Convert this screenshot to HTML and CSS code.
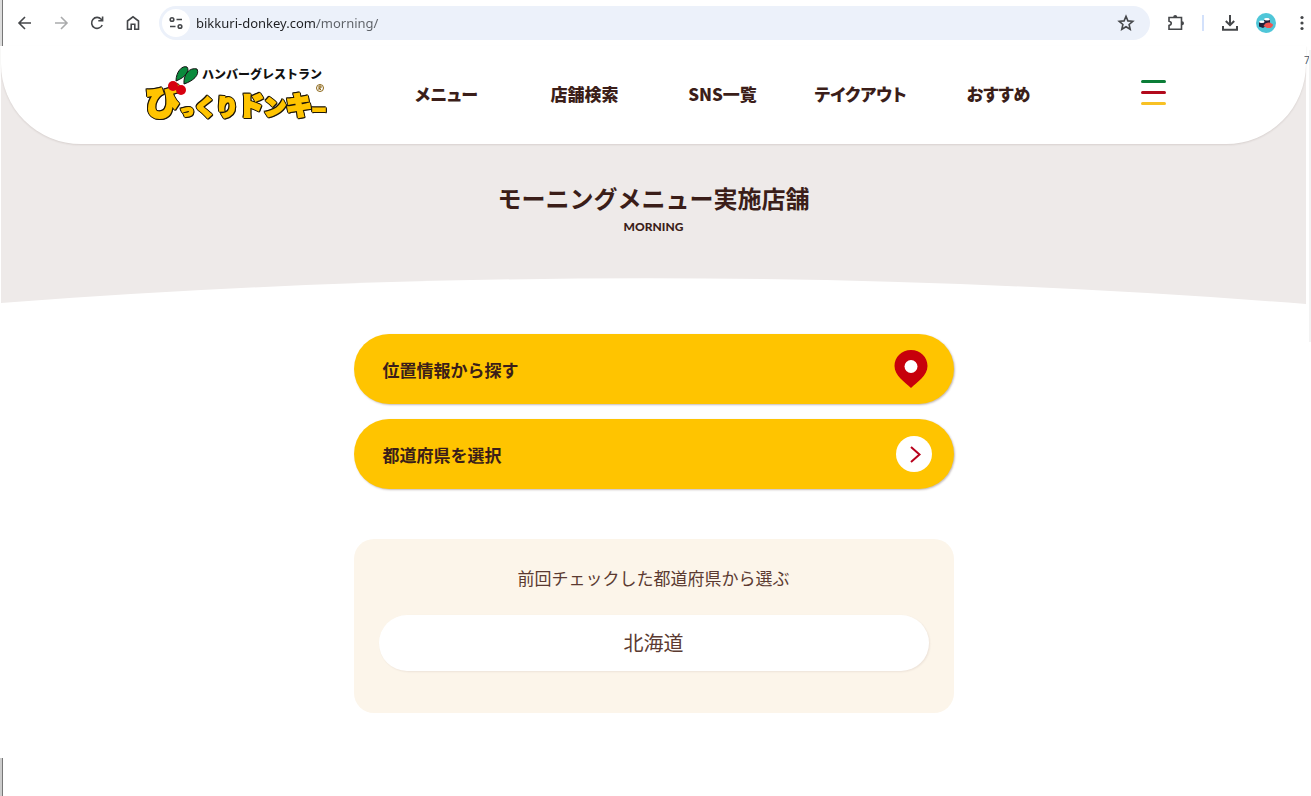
FILE: index.html
```html
<!DOCTYPE html>
<html lang="ja">
<head>
  <meta charset="UTF-8" />
  <title>モーニングメニュー実施店舗</title>
  <meta name="viewport" content="width=device-width, initial-scale=1.0"/>
  <link rel="stylesheet" href="styles.css">
</head>
<body>
  <div class="toolbar">
    <div class="tools">
      <button type="button" aria-label="戻る">
        <svg width="18" height="18" viewBox="0 0 18 18"><path d="M15 9H3.500M9 3L3 9l6 6"/></svg>
      </button>
      <button type="button" aria-label="進む" disabled>
        <svg width="18" height="18" viewBox="0 0 18 18"><path d="M3 9h11.500M9 3l6 6-6 6"/></svg>
      </button>
      <button type="button" aria-label="再読み込み">
        <svg width="18" height="18" viewBox="0 0 18 18"><path d="M14.200 11A5.500 5.500 0 1 1 13.200 5.200L14.500 6.500M14.600 2.500v4.300h-4.300"/></svg>
      </button>
      <button type="button" aria-label="ホーム">
        <svg width="18" height="18" viewBox="0 0 18 18"><path d="M3.500 7L9 2.800 14.500 7v8.300h-3.700v-5H7.200v5H3.500z"/></svg>
      </button>
    </div>
    <div class="omnibox">
      <button type="button" class="site-info" aria-label="サイト情報">
        <svg width="16" height="16" viewBox="0 0 16 16"><circle cx="4" cy="4.500" r="1.800"/><path d="M8.500 4.500H14M2 11.500h5.500"/><circle cx="12" cy="11.500" r="1.800"/></svg>
      </button>
      <input type="text" class="url" aria-label="アドレス" value="bikkuri-donkey.com/morning/">
      <button type="button" aria-label="ブックマーク">
        <svg width="18" height="18" viewBox="0 0 18 18"><path d="M9 2.300l1.900 4.600 4.900.4-3.700 3.200 1.100 4.800L9 12.700l-4.200 2.600 1.100-4.800-3.700-3.200 4.900-.4z"/></svg>
      </button>
    </div>
    <div class="tools right">
      <button type="button" aria-label="拡張機能">
        <svg width="18" height="18" viewBox="0 0 18 18"><path d="M2 3.500h12.500v11.700H2v-3.700c3-.6 3-3.700 0-4.300z"/><path class="solid" d="M6.200 3a2 2 0 0 1 4 0zM15 7.300a2 2 0 0 1 0 4z"/></svg>
      </button>
      <span class="divider"></span>
      <button type="button" aria-label="ダウンロード">
        <svg class="bold" width="18" height="18" viewBox="0 0 18 18"><path d="M9 1v10M4.800 7L9 11.200 13.200 7M2 12v3.800h14V12"/></svg>
      </button>
      <button type="button" class="profile" aria-label="プロフィール">
        <svg width="20" height="20" viewBox="0 0 20 20">
          <circle cx="10" cy="10" r="10" fill="#4fc6d8"/>
          <path d="M3 8.500v5l4 1.500 3-2-1-5z" fill="#22203a"/>
          <path d="M8 6.500v4l6 0v-5z" fill="#22203a"/>
          <ellipse cx="5.800" cy="8.800" rx="2.800" ry="1.200" fill="#fff"/>
          <ellipse cx="11" cy="6.200" rx="3" ry="1.200" fill="#fff"/>
          <path d="M7.500 13c2-4 7-4.500 9.500-1.500 0 3-3 4-6 3.500z" fill="#ef5350"/>
        </svg>
      </button>
      <button type="button" class="dots" aria-label="メニューを開く">
        <svg width="6" height="18" viewBox="0 0 6 18"><g class="solid"><circle cx="3" cy="3.500" r="1.600"/><circle cx="3" cy="9" r="1.600"/><circle cx="3" cy="14.500" r="1.600"/></g></svg>
      </button>
    </div>
  </div>

  <div class="page">
    <div class="top">
      <header class="header">
        <div class="header-inner">
          <a href="#" class="logo" aria-label="びっくりドンキー">
            <svg width="186" height="64" viewBox="0 0 186 64">
              <text class="logo-sub" x="60" y="17">ハンバーグレストラン</text>
              <text class="logo-main" x="4" y="53"><tspan class="xl">び</tspan><tspan class="s">っ</tspan><tspan class="m">く</tspan><tspan class="m">り</tspan><tspan class="l">ド</tspan><tspan class="m">ン</tspan><tspan class="l">キ</tspan><tspan class="s">ー</tspan></text>
              <g fill="#0a8a3c" stroke="#111" stroke-width="1">
                <path d="M34 19C34 10 40 3 45 5c3 4-1 10-11 14z"/>
                <path d="M42 22C41 12 48 5 55 7c3 6-4 12-13 15z"/>
              </g>
              <circle cx="31" cy="24" r="5" fill="#d7000f"/>
              <circle cx="39" cy="28" r="5" fill="#d7000f"/>
              <g fill="none" stroke="#8a6414">
                <circle cx="178" cy="26" r="3.500"/>
                <path d="M177 28v-4h2v2h-2l2 2"/>
              </g>
            </svg>
          </a>
          <nav class="nav">
            <a href="#">メニュー</a>
            <a href="#">店舗検索</a>
            <a href="#">SNS一覧</a>
            <a href="#">テイクアウト</a>
            <a href="#">おすすめ</a>
          </nav>
          <button type="button" class="menu" aria-label="メニュー">
            <span class="green"></span>
            <span class="red"></span>
            <span class="yellow"></span>
          </button>
        </div>
      </header>
      <div class="hero">
        <h1>モーニングメニュー実施店舗</h1>
        <p>MORNING</p>
      </div>
      <svg class="curve" viewBox="0 0 100 26" preserveAspectRatio="none"><path d="M0 25Q50-25 100 26V27H0z"/></svg>
    </div>

    <main class="content">
      <button type="button" class="search-button">
        位置情報から探す
        <svg class="pin" width="34" height="38" viewBox="0 0 34 38"><path d="M17 0C7.500 0 .5 7 .5 16 .5 26 11 32 17 38c6-6 16.500-12 16.500-22C33.500 7 26.500 0 17 0z" fill="#c7000b"/><circle cx="17" cy="16.500" r="6.500" fill="#fff"/></svg>
      </button>
      <button type="button" class="search-button">
        都道府県を選択
        <svg width="36" height="36" viewBox="0 0 36 36"><circle cx="18" cy="18" r="18" fill="#fff"/><path d="M15 11l8.500 7.500L15 26" fill="none" stroke="#b8001c" stroke-width="2"/></svg>
      </button>
      <section class="history">
        <h2>前回チェックした都道府県から選ぶ</h2>
        <a href="#">北海道</a>
      </section>
    </main>
  </div>
  <div class="behind">7</div>
  <div class="corner"></div>
</body>
</html>
```
FILE: styles.css
```css
:root {
  --brown: #3b1e19;
  --yellow: #ffc400;
  --grey: #eeeae9;
  --cream: #fcf5ea;
}
* {
  box-sizing: border-box;
}
body {
  margin: 0;
  min-height: 100vh;
  position: relative;
  overflow: hidden;
  background: #fff;
  color: var(--brown);
  font-family: "Noto Sans CJK JP", sans-serif;
}
a {
  color: inherit;
  text-decoration: none;
}
button {
  border: none;
  background: none;
  padding: 0;
  color: inherit;
  font-family: inherit;
  cursor: pointer;
}
svg {
  display: block;
}

/* browser toolbar */
.toolbar {
  display: flex;
  align-items: center;
  height: 46px;
  margin-left: 2px;
  padding-left: 13px;
  border-left: 1px solid #777;
  box-shadow: -2px 0 0 #ddd;
}
.toolbar svg {
  fill: none;
  stroke: #45474a;
  stroke-width: 1.6;
}
.toolbar .bold {
  stroke-width: 2;
}
.toolbar .solid {
  fill: #45474a;
  stroke: none;
}
.toolbar .profile svg {
  stroke: none;
}
.toolbar button:disabled {
  opacity: 0.45;
}
.tools {
  display: flex;
  align-items: center;
  gap: 18px;
}
.omnibox {
  flex: 1;
  display: flex;
  align-items: center;
  height: 34px;
  margin-left: 17px;
  padding: 0 15px 0 3px;
  border-radius: 17px;
  background: #ecf1fa;
}
.site-info {
  display: grid;
  place-items: center;
  width: 28px;
  height: 28px;
  border-radius: 50%;
  background: #fff;
}
.url {
  flex: 1;
  min-width: 0;
  padding: 0;
  margin-left: 6px;
  border: none;
  outline: none;
  font: 13px/20px "Noto Sans", sans-serif;
  color: transparent;
  /* host is darker than the path */
  background: linear-gradient(90deg, #1f2023 121px, #5c6066 121px);
  -webkit-background-clip: text;
  background-clip: text;
}
.right {
  gap: 17px;
  margin-left: 17px;
  padding-right: 6px;
}
.divider {
  width: 2px;
  height: 16px;
  background: #d3e1fb;
}
.dots {
  margin-left: 6px;
}

/* site */
.page {
  margin: 0 5px 0 1px;
}
.top {
  background: var(--grey);
}
.header {
  background: #fff;
  border-radius: 0 0 80px 80px;
  box-shadow: 0 1px 2px rgba(59, 30, 25, 0.12);
}
.header-inner {
  display: flex;
  align-items: center;
  max-width: 1024px;
  height: 98px;
  margin: 0 auto;
  padding-bottom: 2px;
}
.logo-sub {
  font-size: 12px;
  font-weight: 900;
  fill: #111;
}
.logo-main {
  font-weight: 900;
  fill: var(--yellow);
  stroke: var(--yellow);
  stroke-width: 2px;
  filter: drop-shadow(1px 1px 0 #1d1608) drop-shadow(-1px 0 0 #1d1608) drop-shadow(0 -1px 0 #1d1608);
}
.logo-main .xl {
  font-size: 34px;
}
.logo-main .l {
  font-size: 26px;
}
.logo-main .m {
  font-size: 22px;
}
.logo-main .s {
  font-size: 14px;
}
.nav {
  flex: 1;
  display: grid;
  grid-template-columns: repeat(5, 1fr);
  margin: 0 73px 0 50px;
  text-align: center;
  font-size: 17px;
  line-height: 24px;
  font-weight: 900;
  font-feature-settings: "palt";
}
.menu {
  display: flex;
  flex-direction: column;
  gap: 8px;
  width: 25px;
  padding-bottom: 4px;
}
.menu span {
  height: 3px;
  border-radius: 2px;
}
.menu .green {
  background: #0b7d37;
}
.menu .red {
  background: #b20a1c;
}
.menu .yellow {
  background: #f8c124;
}
.hero {
  padding: 36px 0 42px;
  text-align: center;
}
.hero h1 {
  margin: 0 0 2px;
  font-size: 24px;
  line-height: 36px;
}
.hero p {
  margin: 0;
  font-family: Lato, sans-serif;
  font-size: 12px;
  line-height: 18px;
  font-weight: 900;
}
.curve {
  width: 100%;
  height: 26px;
  fill: #fff;
}
.content {
  max-width: 600px;
  margin: 0 auto;
  padding-top: 30px;
}
.search-button {
  display: flex;
  align-items: center;
  justify-content: space-between;
  width: 100%;
  height: 70px;
  margin-bottom: 15px;
  padding: 0 22px 0 29px;
  border-radius: 35px;
  background: var(--yellow);
  box-shadow: 1px 1px 2px rgba(59, 30, 25, 0.3);
  font-size: 17px;
  font-weight: 700;
}
.pin {
  margin-right: 4px;
}
.history {
  margin-top: 50px;
  padding: 24px 25px 42px;
  border-radius: 20px;
  background: var(--cream);
  text-align: center;
  color: #5b3a31;
}
.history h2 {
  margin: 0 0 22px;
  font-size: 17px;
  line-height: 30px;
  font-weight: 400;
}
.history a {
  display: block;
  border-radius: 28px;
  background: #fff;
  box-shadow: 1px 1px 2px rgba(59, 30, 25, 0.08);
  font-size: 20px;
  line-height: 56px;
}

/* slivers of the window behind */
.behind {
  position: absolute;
  top: 50px;
  right: 0;
  width: 7px;
  height: 292px;
  overflow: hidden;
  border-right: 2px solid #f3f3f3;
  font: 10px/20px "Open Sans", sans-serif;
  color: #456;
}
.corner {
  position: absolute;
  left: 0;
  bottom: 0;
  width: 3px;
  height: 38px;
  background: #ccc;
  border-right: 1px solid #777;
}
```
